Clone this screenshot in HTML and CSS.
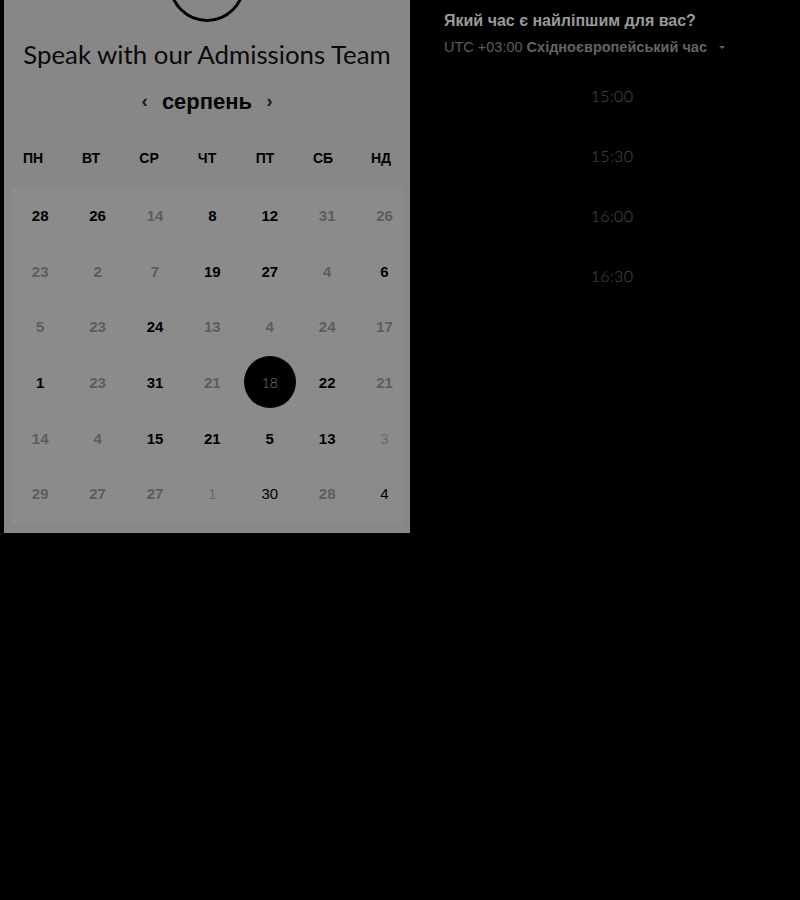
FILE: index.html
```html
<!DOCTYPE html>
<html lang="uk">
<head>
<meta charset="utf-8">
<title>Speak with our Admissions Team</title>
<link rel="stylesheet" href="styles.css">
</head>
<body>
<div class="page">
  <section class="panel">
    <div class="logo"></div>
    <h1 class="title">Speak with our Admissions Team</h1>
    <div class="month">
      <span class="chev">&#8249;</span>
      <span class="month-name">серпень</span>
      <span class="chev">&#8250;</span>
    </div>
    <div class="weekdays">
      <span>ПН</span><span>ВТ</span><span>СР</span><span>ЧТ</span><span>ПТ</span><span>СБ</span><span>НД</span>
    </div>
    <div class="table">
      <div class="days">
        <span class="on">28</span><span class="on">26</span><span class="off">14</span><span class="on">8</span><span class="on">12</span><span class="off">31</span><span class="off">26</span>
        <span class="off">23</span><span class="off">2</span><span class="off">7</span><span class="on">19</span><span class="on">27</span><span class="off">4</span><span class="on">6</span>
        <span class="off">5</span><span class="off">23</span><span class="on">24</span><span class="off">13</span><span class="off">4</span><span class="off">24</span><span class="off">17</span>
        <span class="on">1</span><span class="off">23</span><span class="on">31</span><span class="off">21</span><span class="sel"><b>18</b></span><span class="on">22</span><span class="off">21</span>
        <span class="off">14</span><span class="off">4</span><span class="on">15</span><span class="on">21</span><span class="on">5</span><span class="on">13</span><span class="off light">3</span>
        <span class="off">29</span><span class="off">27</span><span class="off">27</span><span class="off light">1</span><span class="plain">30</span><span class="off">28</span><span class="plain">4</span>
      </div>
    </div>
  </section>
  <section class="side">
    <h2 class="question">Який час є найліпшим для вас?</h2>
    <div class="tz">UTC +03:00 <strong>Східноєвропейський час</strong> <span class="caret"></span></div>
    <ul class="times">
      <li>15:00</li>
      <li>15:30</li>
      <li>16:00</li>
      <li>16:30</li>
    </ul>
  </section>
</div>
</body>
</html>
```

FILE: styles.css
```css
html, body {
  margin: 0;
  padding: 0;
  background: #000;
  height: 100%;
}

body {
  font-family: "Liberation Sans", Arial, sans-serif;
}

.page {
  display: flex;
  align-items: flex-start;
  padding-left: 4px;
}

.panel {
  width: 406px;
  flex: none;
  background: #878787;
  padding-bottom: 9px;
  overflow: hidden;
}

.logo {
  width: 70px;
  height: 70px;
  border: 3px solid #000;
  border-radius: 50%;
  margin: -54px auto 0;
}

.title {
  margin: 15px 0 0;
  font-family: Lato, "Noto Sans", sans-serif;
  font-weight: 400;
  font-size: 25.8px;
  line-height: 34px;
  text-align: center;
  color: #0a0a0a;
}

.month {
  display: flex;
  justify-content: center;
  align-items: center;
  gap: 14px;
  margin-top: 17px;
  height: 28px;
}

.month-name {
  font-weight: 700;
  font-size: 22px;
  color: #050505;
}

.chev {
  font-weight: 700;
  font-size: 19px;
  color: #1a1a1a;
  line-height: 1;
  margin-top: -4px;
}

.weekdays {
  display: grid;
  grid-template-columns: repeat(7, 1fr);
  height: 57px;
  align-items: center;
  margin-top: 13px;
}

.weekdays span {
  text-align: center;
  font-weight: 700;
  font-size: 14px;
  color: #000;
}

.table {
  margin: 2px 7px 0 8px;
  background: #8b8b8b;
  height: 336px;
}

.days {
  display: grid;
  grid-template-columns: repeat(7, 57.4px);
  grid-auto-rows: 55.6px;
  margin-left: -0.5px;
}

.days span {
  display: flex;
  align-items: center;
  justify-content: center;
  font-size: 15px;
}

.days .on {
  font-weight: 700;
  color: #000;
}

.days .off {
  font-weight: 700;
  color: #5d5d5d;
}

.days .off.light {
  font-weight: 400;
  color: #6c6c6c;
}

.days .plain {
  font-weight: 400;
  color: #000;
}

.days .sel b {
  display: flex;
  align-items: center;
  justify-content: center;
  width: 52px;
  height: 52px;
  border-radius: 50%;
  background: #000;
  color: #777;
  font-family: Lato, sans-serif;
  font-weight: 300;
  font-size: 14px;
  margin-top: -1px;
}

.side {
  width: 336px;
  margin-left: 34px;
}

.question {
  margin: 12px 0 0;
  font-size: 16px;
  font-weight: 700;
  color: #9a9a9a;
  line-height: 18px;
}

.tz {
  margin-top: 9px;
  font-size: 14.5px;
  color: #5c5c5c;
  line-height: 16px;
  display: flex;
  align-items: center;
  gap: 4px;
}

.tz strong {
  font-weight: 700;
  color: #646464;
}

.caret {
  width: 0;
  height: 0;
  border-left: 3px solid transparent;
  border-right: 3px solid transparent;
  border-top: 3px solid #5f5f5f;
  margin-left: 8px;
}

.times {
  list-style: none;
  margin: 11px 0 0;
  padding: 0;
}

.times li {
  height: 60px;
  line-height: 60px;
  text-align: center;
  font-family: Lato, sans-serif;
  font-weight: 300;
  font-size: 16px;
  color: #4d4d4d;
  letter-spacing: 0.3px;
}
```
